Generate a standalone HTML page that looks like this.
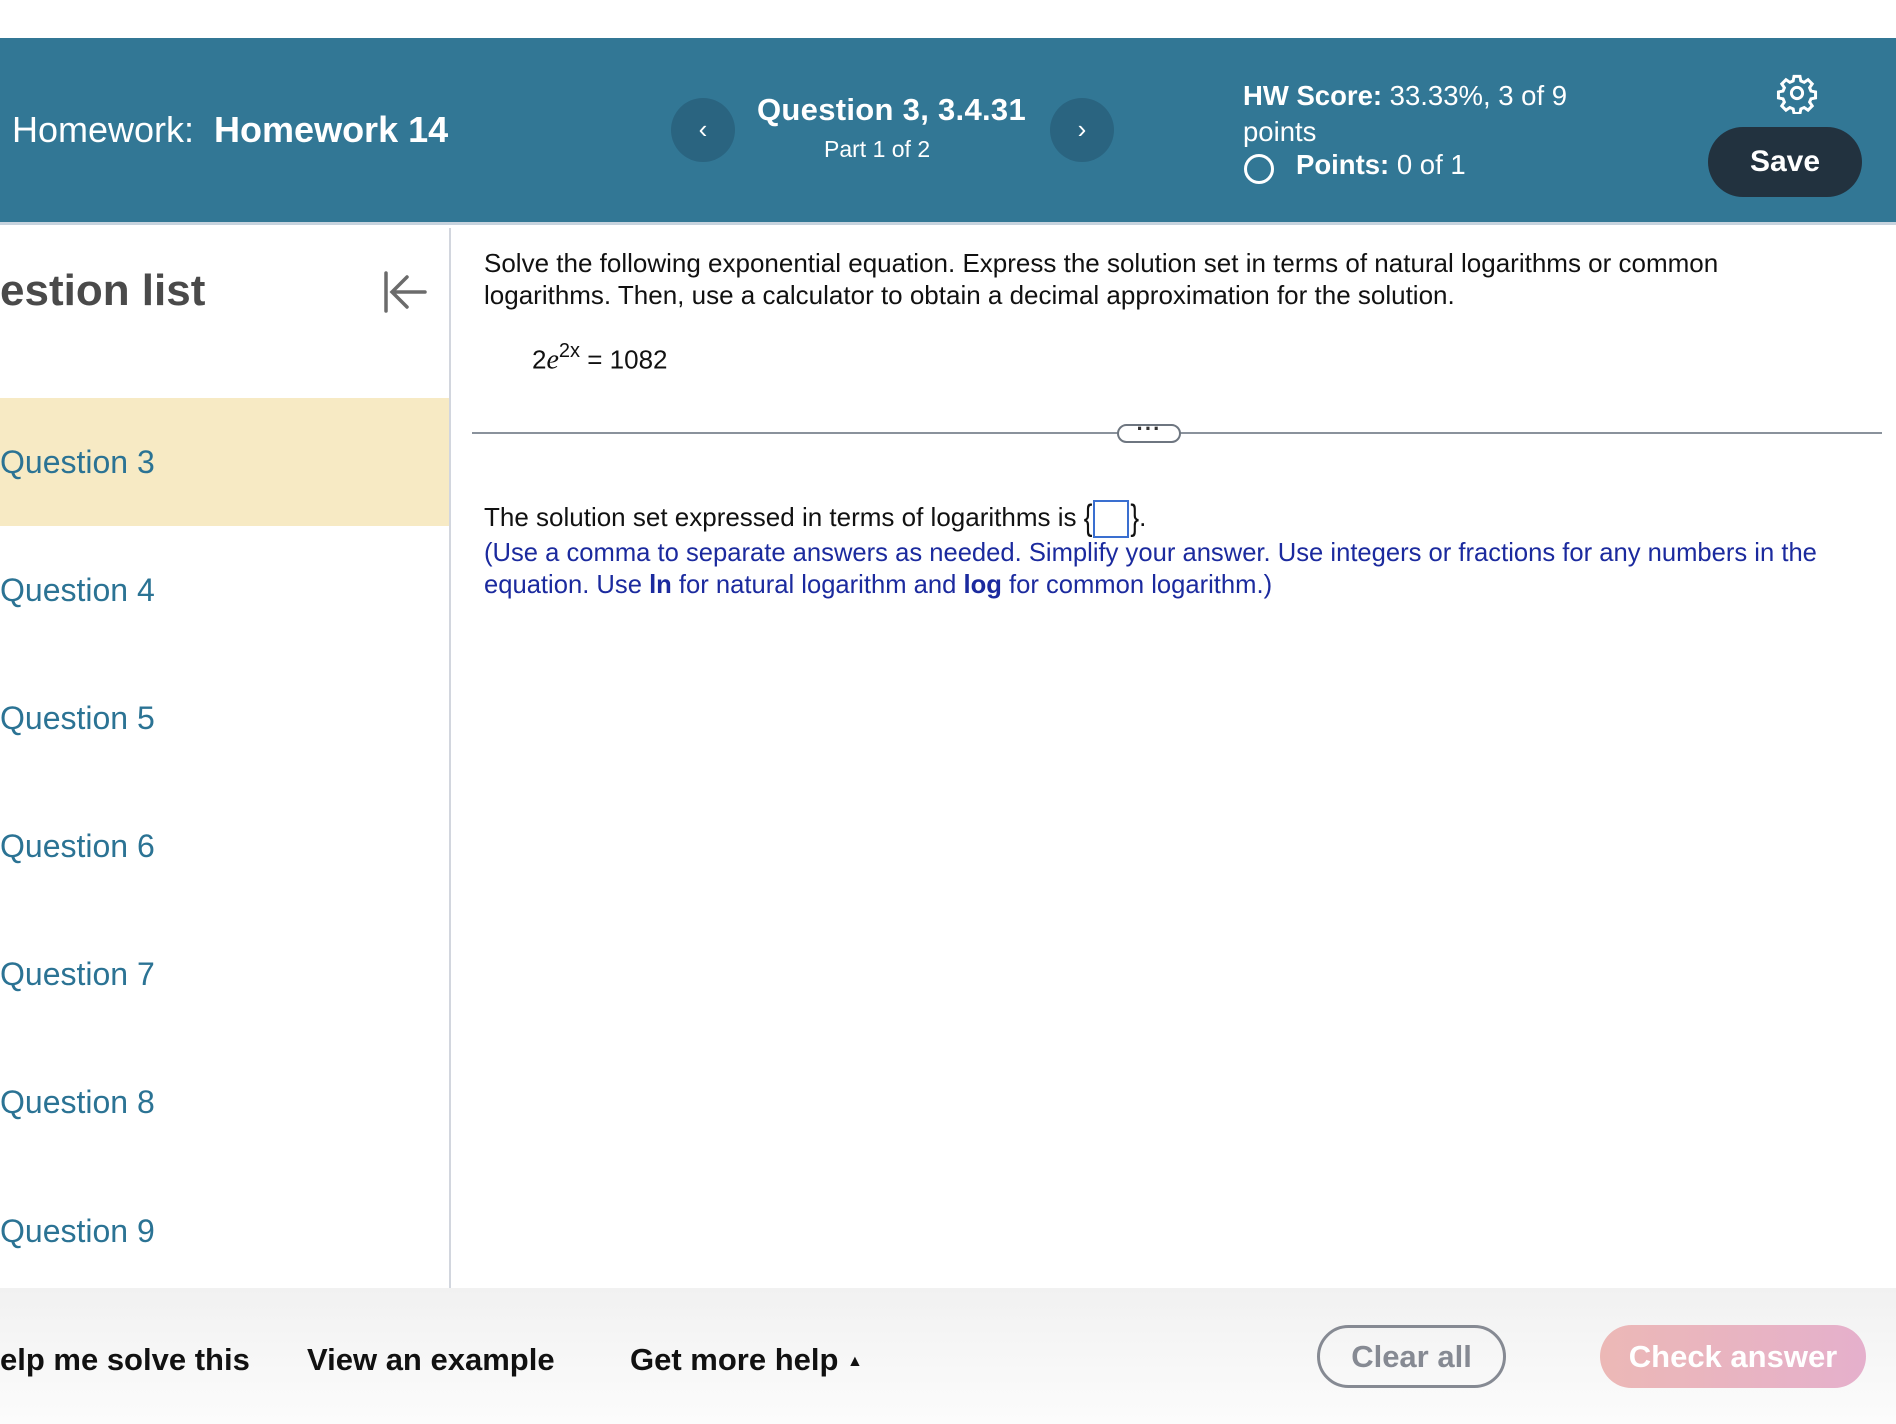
<!DOCTYPE html>
<html><head><meta charset="utf-8"><style>
*{margin:0;padding:0;box-sizing:border-box}
body{width:1896px;height:1424px;overflow:hidden;background:#fff;font-family:"Liberation Sans",Arial,sans-serif;position:relative}
.a{position:absolute;white-space:nowrap}
#hdr{position:absolute;left:0;top:38px;width:1896px;height:187px;background:#327795;border-bottom:3px solid #c7d3de}
.circ{position:absolute;width:64px;height:64px;border-radius:50%;background:#2a6480;color:#fff;font-size:26px;text-align:center;line-height:62px}
#side{position:absolute;left:0;top:228px;width:451px;height:1060px;border-right:2px solid #d2d6de}
.q{position:absolute;left:0;width:449px;height:128px;font-size:32px;color:#2b7394;line-height:128px}
#foot{position:absolute;left:0;top:1288px;width:1896px;height:136px;background:linear-gradient(#f1f1f1,#fcfcfc)}
.fb{position:absolute;top:52px;font-size:31px;font-weight:bold;color:#111;line-height:40px}
.t{font-size:26px;color:#111}
.b{font-size:25.6px;color:#1b2a9e}
</style></head><body>
<div id="hdr">
 <div class="a" style="left:12px;top:71px;font-size:36px;color:#fff">Homework:&nbsp; <b>Homework 14</b></div>
 <div class="circ" style="left:671px;top:60px">&#8249;</div>
 <div class="a" style="left:757px;top:54px;font-size:31px;font-weight:bold;color:#fff;letter-spacing:0.3px">Question 3, 3.4.31</div>
 <div class="a" style="left:824px;top:98px;font-size:23px;color:#fff">Part 1 of 2</div>
 <div class="circ" style="left:1050px;top:60px">&#8250;</div>
 <div class="a" style="left:1243px;top:40px;font-size:27.5px;color:#fff;line-height:36px"><b>HW Score:</b> 33.33%, 3 of 9<br>points</div>
 <div class="a" style="left:1244px;top:116px;width:30px;height:30px;border:3px solid #fff;border-radius:50%"></div>
 <div class="a" style="left:1296px;top:111px;font-size:27.5px;color:#fff"><b>Points:</b> 0 of 1</div>
 <svg class="a" style="left:1776px;top:34px" width="42" height="42" viewBox="0 0 24 24" fill="none" stroke="#fff" stroke-width="1.7"><circle cx="12" cy="12" r="3.2"/><path d="M10.3 2.5h3.4l.5 2.6 1.9.8 2.2-1.5 2.4 2.4-1.5 2.2.8 1.9 2.6.5v3.4l-2.6.5-.8 1.9 1.5 2.2-2.4 2.4-2.2-1.5-1.9.8-.5 2.6h-3.4l-.5-2.6-1.9-.8-2.2 1.5-2.4-2.4 1.5-2.2-.8-1.9-2.6-.5v-3.4l2.6-.5.8-1.9-1.5-2.2 2.4-2.4 2.2 1.5 1.9-.8z"/></svg>
 <div class="a" style="left:1708px;top:89px;width:154px;height:70px;border-radius:35px;background:#22323f;color:#fff;font-size:30px;font-weight:bold;text-align:center;line-height:70px">Save</div>
</div>
<div id="side">
 <div class="a" style="left:0;top:38px;font-size:44px;font-weight:bold;color:#4a4a4a">estion list</div>
 <svg class="a" style="left:381px;top:42px" width="48" height="44" viewBox="0 0 48 44" fill="none" stroke="#6b6b6b" stroke-width="3.5" stroke-linecap="round"><path d="M5 3v38M44 22H12M26 7L11 22l15 15"/></svg>
 <div class="q" style="top:170px;background:#f7eac4">Question 3</div>
 <div class="q" style="top:298px">Question 4</div>
 <div class="q" style="top:426px">Question 5</div>
 <div class="q" style="top:554px">Question 6</div>
 <div class="q" style="top:682px">Question 7</div>
 <div class="q" style="top:810px">Question 8</div>
 <div class="q" style="top:939px">Question 9</div>
</div>
<div class="a t" style="left:484px;top:247px;line-height:32px">Solve the following exponential equation. Express the solution set in terms of natural logarithms or common<br>logarithms. Then, use a calculator to obtain a decimal approximation for the solution.</div>
<div class="a t" style="left:532px;top:342px;font-size:26px">2<i style="font-family:'Liberation Serif',serif;font-size:28px">e</i><sup style="font-size:20px;position:relative;top:-2px">2x</sup> = 1082</div>
<div class="a" style="left:472px;top:432px;width:1410px;height:2px;background:#8a929c"></div>
<div class="a" style="left:1117px;top:424px;width:64px;height:19px;border:2px solid #6e7680;border-radius:10px;background:#fff;font-size:22px;text-align:center;line-height:6px;color:#333;font-weight:bold;letter-spacing:1px">&middot;&middot;&middot;</div>
<div class="a t" style="left:484px;top:500px">The solution set expressed in terms of logarithms is <span style="display:inline-block;transform:scaleY(1.4);font-size:26px">{</span><span style="display:inline-block;width:36px;height:38px;border:2px solid #3a6fd0;vertical-align:middle;margin:0 1px"></span><span style="display:inline-block;transform:scaleY(1.4);font-size:26px">}</span>.</div>
<div class="a b" style="left:484px;top:537px;line-height:32px">(Use a comma to separate answers as needed. Simplify your answer. Use integers or fractions for any numbers in the<br>equation. Use <b>ln</b> for natural logarithm and <b>log</b> for common logarithm.)</div>
<div id="foot">
 <div class="fb" style="left:0">elp me solve this</div>
 <div class="fb" style="left:307px">View an example</div>
 <div class="fb" style="left:630px">Get more help <span style="font-size:16px;vertical-align:middle">&#9650;</span></div>
 <div class="a" style="left:1317px;top:37px;width:189px;height:63px;border:3px solid #868a93;border-radius:32px;text-align:center;line-height:57px;font-size:31px;font-weight:bold;color:#868a93">Clear all</div>
 <div class="a" style="left:1600px;top:37px;width:266px;height:63px;border-radius:32px;background:linear-gradient(90deg,#ecb8b6,#e5b0cc);text-align:center;line-height:63px;font-size:31px;font-weight:bold;color:#fff">Check answer</div>
</div>
</body></html>
